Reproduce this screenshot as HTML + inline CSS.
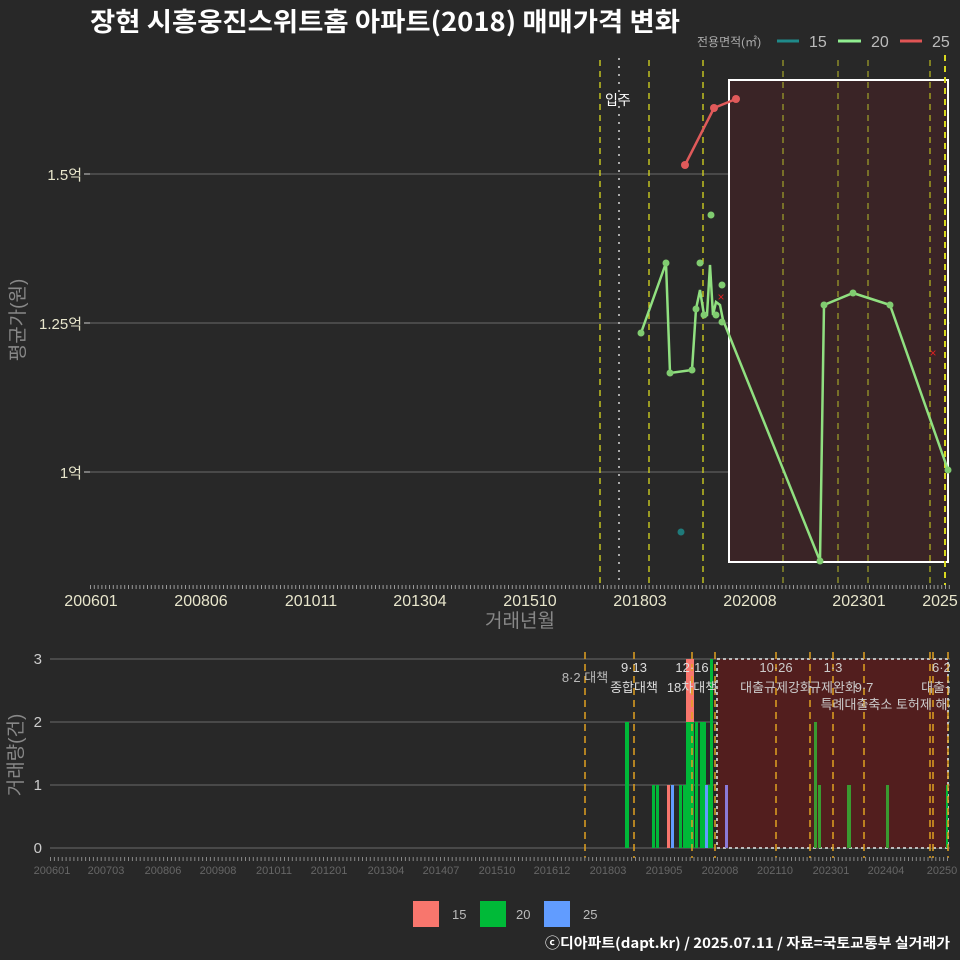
<!DOCTYPE html>
<html><head><meta charset="utf-8"><style>
html,body{margin:0;padding:0;background:#282828;}
svg{display:block;font-family:"Liberation Sans","Noto Sans CJK KR",sans-serif;}
</style></head><body>
<svg width="960" height="960" viewBox="0 0 960 960" xmlns="http://www.w3.org/2000/svg">
<rect width="960" height="960" fill="#282828"/>
<text x="90" y="31" font-size="26" font-weight="bold" fill="#fff" textLength="590" lengthAdjust="spacingAndGlyphs" font-family="'Noto Sans CJK KR',sans-serif">장현 시흥웅진스위트홈 아파트(2018) 매매가격 변화</text>
<!-- legend -->
<text x="697" y="46" font-size="12" fill="#aaa">전용면적(㎡)</text>
<line x1="777" y1="41" x2="799" y2="41" stroke="#1f8a8a" stroke-width="3"/>
<text x="809" y="47" font-size="16" fill="#bbb">15</text>
<line x1="838" y1="41" x2="861" y2="41" stroke="#90ee90" stroke-width="3"/>
<text x="871" y="47" font-size="16" fill="#bbb">20</text>
<line x1="900" y1="41" x2="922" y2="41" stroke="#e05555" stroke-width="3"/>
<text x="932" y="47" font-size="16" fill="#bbb">25</text>

<!-- top panel grid -->
<g stroke="#6a6a6a" stroke-width="1">
<line x1="90" y1="174" x2="950" y2="174"/><line x1="90" y1="323" x2="950" y2="323"/><line x1="90" y1="472" x2="950" y2="472"/>
</g>
<g font-size="15" fill="#e8e6cc" text-anchor="end">
<text x="82" y="180">1.5억</text><text x="82" y="329">1.25억</text><text x="82" y="478">1억</text>
</g>
<g stroke="#ccc"><line x1="84" y1="174" x2="90" y2="174"/><line x1="84" y1="323" x2="90" y2="323"/><line x1="84" y1="472" x2="90" y2="472"/></g>
<text transform="translate(24,320) rotate(-90)" font-size="19" fill="#888" text-anchor="middle">평균가(원)</text>
<rect x="729" y="80" width="219" height="482" fill="#3a2426" stroke="#fff" stroke-width="2"/>
<g stroke="#d8d820" stroke-width="1.3" stroke-dasharray="6,5">
<line x1="600" y1="60" x2="600" y2="585"/><line x1="649" y1="60" x2="649" y2="585"/><line x1="703" y1="60" x2="703" y2="585"/>
<line x1="783" y1="60" x2="783" y2="585" stroke="#9a9a2a"/><line x1="838" y1="60" x2="838" y2="585" stroke="#9a9a2a"/><line x1="868" y1="60" x2="868" y2="585" stroke="#9a9a2a"/>
<line x1="930" y1="60" x2="930" y2="585" stroke="#b0b020"/><line x1="945" y1="55" x2="945" y2="585" stroke-width="2"/>
</g>
<line x1="619" y1="58" x2="619" y2="585" stroke="#aaa" stroke-width="2" stroke-dasharray="2,6"/>
<text x="605" y="105" font-size="14" fill="#fff">입주</text>
<!-- x ticks -->
<line x1="90" y1="587" x2="950" y2="587" stroke="#999" stroke-width="4" stroke-dasharray="1,2.8"/>
<g font-size="16" fill="#e8e6cc" text-anchor="middle">
<text x="91" y="606">200601</text><text x="201" y="606">200806</text><text x="311" y="606">201011</text><text x="420" y="606">201304</text>
<text x="530" y="606">201510</text><text x="640" y="606">201803</text><text x="750" y="606">202008</text><text x="859" y="606">202301</text><text x="940" y="606">2025</text>
</g>
<text x="520" y="627" font-size="19" fill="#888" text-anchor="middle">거래년월</text>
<!-- data -->
<polyline fill="none" stroke="#e05a5a" stroke-width="2.5" points="685,165 714,108 736,99"/>
<g fill="#e05a5a"><circle cx="685" cy="165" r="4"/><circle cx="714" cy="108" r="4"/><circle cx="736" cy="99" r="4"/></g>
<polyline fill="none" stroke="#90e080" stroke-width="2.5" points="641,333 666,263 670,373 692,370 696,309 700,290 704,315 707,315 710,265 713,315 716,302 720,305 723,320 820,561 824,305 853,293 890,305 948,470"/>
<g fill="#80cc70">
<circle cx="641" cy="333" r="3.5"/><circle cx="666" cy="263" r="3.5"/><circle cx="670" cy="373" r="3.5"/><circle cx="692" cy="370" r="3.5"/>
<circle cx="696" cy="309" r="3.5"/><circle cx="700" cy="263" r="3.5"/><circle cx="704" cy="315" r="3.5"/><circle cx="711" cy="215" r="3.5"/>
<circle cx="716" cy="315" r="3.5"/><circle cx="722" cy="285" r="3.5"/><circle cx="722" cy="322" r="3.5"/><circle cx="820" cy="561" r="3.5"/>
<circle cx="824" cy="305" r="3.5"/><circle cx="853" cy="293" r="3.5"/><circle cx="890" cy="305" r="3.5"/><circle cx="948" cy="470" r="3.5"/>
</g>
<circle cx="681" cy="532" r="3.5" fill="#1f7a7a"/>
<g font-size="12" fill="#e02020" text-anchor="middle"><text x="721" y="301">×</text><text x="933" y="357">×</text></g>

<!-- bottom panel -->
<g stroke="#6a6a6a" stroke-width="1">
<line x1="50" y1="659" x2="950" y2="659"/><line x1="50" y1="722" x2="950" y2="722"/><line x1="50" y1="785" x2="950" y2="785"/><line x1="50" y1="848" x2="950" y2="848"/>
</g>
<g font-size="15" fill="#ccc" text-anchor="end"><text x="42" y="664">3</text><text x="42" y="727">2</text><text x="42" y="790">1</text><text x="42" y="853">0</text></g>
<text transform="translate(22,755) rotate(-90)" font-size="19" fill="#888" text-anchor="middle">거래량(건)</text>
<rect x="717" y="659" width="231" height="189" fill="#521e1e" stroke="#bbb" stroke-width="2" stroke-dasharray="3,3"/>
<!-- bars -->
<g fill="#00b838">
<rect x="625" y="722" width="4" height="126"/><rect x="652" y="785" width="3" height="63"/><rect x="656" y="785" width="3" height="63"/>
<rect x="679" y="785" width="3" height="63"/><rect x="683" y="785" width="3" height="63"/><rect x="686" y="722" width="8" height="126"/>
<rect x="695" y="722" width="3" height="126"/><rect x="700" y="722" width="3" height="126"/><rect x="703" y="722" width="3" height="126"/>
<rect x="708" y="785" width="3" height="63"/><rect x="710" y="659" width="3" height="189"/>
<rect x="814" y="722" width="3" height="126" fill="#3a9a30"/><rect x="818" y="785" width="3" height="63" fill="#3a9a30"/>
<rect x="847" y="785" width="4" height="63" fill="#3a9a30"/><rect x="886" y="785" width="3" height="63" fill="#3a9a30"/><rect x="946" y="785" width="2" height="63"/>
</g>
<rect x="686" y="659" width="8" height="63" fill="#f8766d"/>
<rect x="667" y="785" width="3" height="63" fill="#f8766d"/>
<rect x="671" y="785" width="3" height="63" fill="#619cff"/>
<rect x="705" y="785" width="3" height="63" fill="#619cff"/>
<rect x="725" y="785" width="3" height="63" fill="#8a7ad8"/>
<g stroke="#e0a020" stroke-width="1.5" stroke-dasharray="7,5">
<line x1="585" y1="652" x2="585" y2="858"/><line x1="634" y1="652" x2="634" y2="858"/><line x1="692" y1="652" x2="692" y2="858"/><line x1="715" y1="652" x2="715" y2="858"/>
<line x1="776" y1="652" x2="776" y2="858"/><line x1="810" y1="652" x2="810" y2="858"/><line x1="833" y1="652" x2="833" y2="858"/><line x1="864" y1="652" x2="864" y2="858"/>
<line x1="930" y1="652" x2="930" y2="858"/><line x1="933" y1="652" x2="933" y2="858"/><line x1="948" y1="652" x2="948" y2="858"/>
</g>
<g font-size="13" fill="#ddd" text-anchor="middle">
<text x="585" y="682" fill="#bbb">8·2 대책</text><text x="634" y="672">9·13</text><text x="634" y="692">종합대책</text>
<text x="692" y="672">12·16</text><text x="692" y="692">18차대책</text>
<text x="776" y="672" fill="#ccc">10·26</text><text x="776" y="692" fill="#ccc">대출규제강화</text>
<text x="833" y="672" fill="#ccc">1·3</text><text x="833" y="692" fill="#ccc">규제완화</text><text x="864" y="692" fill="#ccc">9·7</text>
<text x="890" y="709" fill="#ccc">특례대출축소 토허제 해제</text>
<text x="945" y="672" fill="#ccc">6·27</text><text x="945" y="692" fill="#ccc">대출규제</text>
</g>
<rect x="950" y="650" width="10" height="215" fill="#282828"/>
<line x1="50" y1="859" x2="950" y2="859" stroke="#888" stroke-width="4" stroke-dasharray="1,2.9"/>
<g font-size="11" fill="#666" text-anchor="middle">
<text x="52" y="874">200601</text><text x="106" y="874">200703</text><text x="163" y="874">200806</text><text x="218" y="874">200908</text>
<text x="274" y="874">201011</text><text x="329" y="874">201201</text><text x="386" y="874">201304</text><text x="441" y="874">201407</text>
<text x="497" y="874">201510</text><text x="552" y="874">201612</text><text x="608" y="874">201803</text><text x="664" y="874">201905</text>
<text x="720" y="874">202008</text><text x="775" y="874">202110</text><text x="831" y="874">202301</text><text x="886" y="874">202404</text><text x="942" y="874">20250</text>
</g>
<!-- footer legend -->
<rect x="413" y="901" width="26" height="26" fill="#f8766d"/><text x="452" y="919" font-size="13" fill="#bbb">15</text>
<rect x="480" y="901" width="26" height="26" fill="#00ba38"/><text x="516" y="919" font-size="13" fill="#bbb">20</text>
<rect x="544" y="901" width="26" height="26" fill="#619cff"/><text x="583" y="919" font-size="13" fill="#bbb">25</text>
<text x="545" y="948" font-size="14" font-weight="bold" fill="#fff" textLength="405" lengthAdjust="spacingAndGlyphs" font-family="'Noto Sans CJK KR',sans-serif">ⓒ디아파트(dapt.kr) / 2025.07.11 / 자료=국토교통부 실거래가</text>
</svg>
</body></html>
